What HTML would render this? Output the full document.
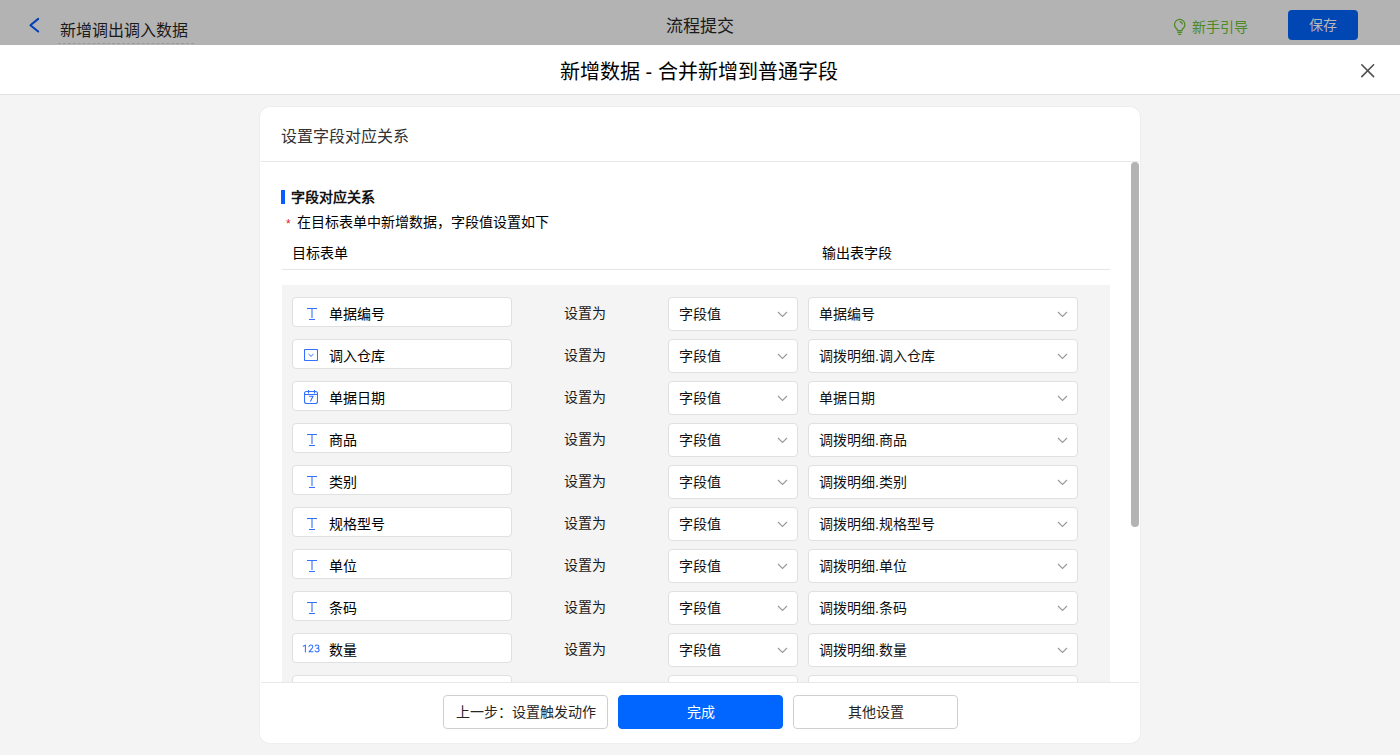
<!DOCTYPE html>
<html lang="zh-CN"><head><meta charset="utf-8">
<style>
*{margin:0;padding:0;box-sizing:border-box;}
html,body{width:1400px;height:755px;overflow:hidden;}
body{position:relative;background:#f4f4f4;font-family:"Liberation Sans",sans-serif;color:#1f1f1f;font-size:14px;}
.abs{position:absolute;}
.topbar{left:0;top:0;width:1400px;height:45px;background:#b3b3b3;}
.modalhd{left:0;top:45px;width:1400px;height:50px;background:#fff;border-bottom:1px solid #e3e3e3;}
.t{position:absolute;white-space:nowrap;line-height:1;}
.card{left:260px;top:107px;width:880px;height:636px;background:#fff;border-radius:10px;overflow:hidden;box-shadow:0 0 0 1px #eeeeee;}
.cardhd{left:1px;top:0;width:878px;height:55px;border-bottom:1px solid #e8e8e8;}
.body{left:0;top:55px;width:880px;height:520px;overflow:hidden;}
.footer{left:1px;top:575px;width:878px;height:61px;border-top:1px solid #e8e8e8;background:#fff;}
.gray{left:22px;top:123px;width:828px;height:600px;background:#f4f4f4;}
.inp{position:absolute;width:220px;height:30px;background:#fff;border:1px solid #e0e0e0;border-radius:4px;}
.sel{position:absolute;height:34px;background:#fff;border:1px solid #e0e0e0;border-radius:4px;}
.btn{position:absolute;top:588px;width:165px;height:34px;border:1px solid #cfcfcf;border-radius:4px;background:#fff;text-align:center;line-height:32px;font-size:14px;color:#262626;}
.ic{position:absolute;}
.nm{left:36px;top:9px;font-size:14px;color:#000;}
.sv{font-size:14px;color:#1a1a1a;}
.sx{left:10px;top:9px;font-size:14px;color:#111;}
.ch{position:absolute;left:108px;top:13px;}
</style></head>
<body>
<!-- top bar (masked) -->
<div class="abs topbar">
  <svg class="abs" style="left:28px;top:17px" width="13" height="17" viewBox="0 0 13 17"><path d="M10.2 1.9 L2.4 8.2 L10.2 14.5" fill="none" stroke="#0040b8" stroke-width="2" stroke-linecap="round" stroke-linejoin="round"/></svg>
  <div class="t" style="left:60px;top:23px;font-size:16px;color:#1a1a1a;">新增调出调入数据</div>
  <div class="abs" style="left:58px;top:43px;width:136px;height:0;border-top:1px dashed #9a9a9a;"></div>
  <div class="t" style="left:666px;top:18px;font-size:17px;color:#1a1a1a;">流程提交</div>
  <svg class="abs" style="left:1173px;top:18px" width="13" height="18" viewBox="0 0 13 18"><path d="M4.3 12.6V11.2C2.4 10.1 1.5 8.4 1.5 6.6A5.2 5.2 0 0 1 11.9 6.6C11.9 8.4 11 10.1 9.1 11.2V12.6Z" fill="none" stroke="#4b8a24" stroke-width="1.2" stroke-linejoin="round"/><path d="M6.6 3.6A3 3 0 0 1 9.4 6.4" fill="none" stroke="#4b8a24" stroke-width="1.1"/><path d="M4.3 14.4H9.1M5.2 16.3H8.2" stroke="#4b8a24" stroke-width="1.2"/></svg>
  <div class="t" style="left:1192px;top:20px;font-size:14px;color:#4b8a24;">新手引导</div>
  <div class="abs" style="left:1288px;top:10px;width:70px;height:30px;background:#0047b3;border-radius:4px;"></div>
  <div class="t" style="left:1309px;top:18px;font-size:14px;color:#b8b8b8;">保存</div>
</div>
<!-- modal header -->
<div class="abs modalhd">
  <div class="t" style="left:560px;top:17px;font-size:20px;color:#000;">新增数据 - 合并新增到普通字段</div>
  <svg class="abs" style="left:1360px;top:18px" width="16" height="16" viewBox="0 0 16 16"><path d="M1.8 1.8L13.6 13.6M13.6 1.8L1.8 13.6" stroke="#505050" stroke-width="1.6" stroke-linecap="round"/></svg>
</div>
<!-- card -->
<div class="abs card">
  <div class="abs cardhd">
    <div class="t" style="left:20px;top:22px;font-size:16px;color:#333;">设置字段对应关系</div>
  </div>
  <div class="abs body">
    <div class="abs" style="left:21px;top:28px;width:4px;height:14px;background:#0a5cff;"></div>
    <div class="t" style="left:31px;top:28px;font-size:14px;font-weight:bold;color:#111;">字段对应关系</div>
    <div class="t" style="left:26px;top:56px;font-size:12px;color:#e02020;">*</div>
    <div class="t" style="left:37px;top:53px;font-size:14px;color:#000;">在目标表单中新增数据，字段值设置如下</div>
    <div class="t" style="left:32px;top:84px;font-size:14px;color:#000;">目标表单</div>
    <div class="t" style="left:562px;top:84px;font-size:14px;color:#000;">输出表字段</div>
    <div class="abs" style="left:22px;top:107px;width:828px;height:1px;background:#e6e6e6;"></div>
    <div class="abs gray" id="gray"></div>
    <div id="rows">
<div class="inp" style="left:32px;top:135px;"><svg class="ic" style="left:14px;top:10px" width="10" height="12" viewBox="0 0 10 12"><path d="M0 0.5H10M5 0.5V10M2 11.5H8" stroke="#3370ff" stroke-width="1.1" fill="none"/></svg><div class="t nm">单据编号</div></div>
<div class="t sv" style="left:304px;top:144px;">设置为</div>
<div class="sel" style="left:408px;top:135px;width:130px;"><div class="t sx">字段值</div><svg class="ch" width="11" height="7" viewBox="0 0 11 7"><path d="M1 1L5.5 5.5L10 1" fill="none" stroke="#999" stroke-width="1.1"/></svg></div>
<div class="sel" style="left:548px;top:135px;width:270px;"><div class="t sx">单据编号</div><svg class="ch" style="left:248px" width="11" height="7" viewBox="0 0 11 7"><path d="M1 1L5.5 5.5L10 1" fill="none" stroke="#999" stroke-width="1.1"/></svg></div>
<div class="inp" style="left:32px;top:177px;"><svg class="ic" style="left:11px;top:9px" width="14" height="12" viewBox="0 0 14 12"><rect x="0.5" y="0.5" width="13" height="11" fill="none" stroke="#3370ff" stroke-width="1.1" rx="0.8"/><path d="M4.5 5L7 7.4L9.5 5" fill="none" stroke="#3370ff" stroke-width="1"/></svg><div class="t nm">调入仓库</div></div>
<div class="t sv" style="left:304px;top:186px;">设置为</div>
<div class="sel" style="left:408px;top:177px;width:130px;"><div class="t sx">字段值</div><svg class="ch" width="11" height="7" viewBox="0 0 11 7"><path d="M1 1L5.5 5.5L10 1" fill="none" stroke="#999" stroke-width="1.1"/></svg></div>
<div class="sel" style="left:548px;top:177px;width:270px;"><div class="t sx">调拨明细.调入仓库</div><svg class="ch" style="left:248px" width="11" height="7" viewBox="0 0 11 7"><path d="M1 1L5.5 5.5L10 1" fill="none" stroke="#999" stroke-width="1.1"/></svg></div>
<div class="inp" style="left:32px;top:219px;"><svg class="ic" style="left:11px;top:8px" width="14" height="14" viewBox="0 0 14 14"><rect x="0.5" y="1.5" width="13" height="12" rx="2" fill="none" stroke="#3370ff" stroke-width="1.1"/><path d="M0.5 4.5H13.5M4.5 0V3.5M10.5 0V3.5" stroke="#3370ff" stroke-width="1.1"/><path d="M5 6.3H9L6.4 11.6" fill="none" stroke="#3370ff" stroke-width="1.1"/></svg><div class="t nm">单据日期</div></div>
<div class="t sv" style="left:304px;top:228px;">设置为</div>
<div class="sel" style="left:408px;top:219px;width:130px;"><div class="t sx">字段值</div><svg class="ch" width="11" height="7" viewBox="0 0 11 7"><path d="M1 1L5.5 5.5L10 1" fill="none" stroke="#999" stroke-width="1.1"/></svg></div>
<div class="sel" style="left:548px;top:219px;width:270px;"><div class="t sx">单据日期</div><svg class="ch" style="left:248px" width="11" height="7" viewBox="0 0 11 7"><path d="M1 1L5.5 5.5L10 1" fill="none" stroke="#999" stroke-width="1.1"/></svg></div>
<div class="inp" style="left:32px;top:261px;"><svg class="ic" style="left:14px;top:10px" width="10" height="12" viewBox="0 0 10 12"><path d="M0 0.5H10M5 0.5V10M2 11.5H8" stroke="#3370ff" stroke-width="1.1" fill="none"/></svg><div class="t nm">商品</div></div>
<div class="t sv" style="left:304px;top:270px;">设置为</div>
<div class="sel" style="left:408px;top:261px;width:130px;"><div class="t sx">字段值</div><svg class="ch" width="11" height="7" viewBox="0 0 11 7"><path d="M1 1L5.5 5.5L10 1" fill="none" stroke="#999" stroke-width="1.1"/></svg></div>
<div class="sel" style="left:548px;top:261px;width:270px;"><div class="t sx">调拨明细.商品</div><svg class="ch" style="left:248px" width="11" height="7" viewBox="0 0 11 7"><path d="M1 1L5.5 5.5L10 1" fill="none" stroke="#999" stroke-width="1.1"/></svg></div>
<div class="inp" style="left:32px;top:303px;"><svg class="ic" style="left:14px;top:10px" width="10" height="12" viewBox="0 0 10 12"><path d="M0 0.5H10M5 0.5V10M2 11.5H8" stroke="#3370ff" stroke-width="1.1" fill="none"/></svg><div class="t nm">类别</div></div>
<div class="t sv" style="left:304px;top:312px;">设置为</div>
<div class="sel" style="left:408px;top:303px;width:130px;"><div class="t sx">字段值</div><svg class="ch" width="11" height="7" viewBox="0 0 11 7"><path d="M1 1L5.5 5.5L10 1" fill="none" stroke="#999" stroke-width="1.1"/></svg></div>
<div class="sel" style="left:548px;top:303px;width:270px;"><div class="t sx">调拨明细.类别</div><svg class="ch" style="left:248px" width="11" height="7" viewBox="0 0 11 7"><path d="M1 1L5.5 5.5L10 1" fill="none" stroke="#999" stroke-width="1.1"/></svg></div>
<div class="inp" style="left:32px;top:345px;"><svg class="ic" style="left:14px;top:10px" width="10" height="12" viewBox="0 0 10 12"><path d="M0 0.5H10M5 0.5V10M2 11.5H8" stroke="#3370ff" stroke-width="1.1" fill="none"/></svg><div class="t nm">规格型号</div></div>
<div class="t sv" style="left:304px;top:354px;">设置为</div>
<div class="sel" style="left:408px;top:345px;width:130px;"><div class="t sx">字段值</div><svg class="ch" width="11" height="7" viewBox="0 0 11 7"><path d="M1 1L5.5 5.5L10 1" fill="none" stroke="#999" stroke-width="1.1"/></svg></div>
<div class="sel" style="left:548px;top:345px;width:270px;"><div class="t sx">调拨明细.规格型号</div><svg class="ch" style="left:248px" width="11" height="7" viewBox="0 0 11 7"><path d="M1 1L5.5 5.5L10 1" fill="none" stroke="#999" stroke-width="1.1"/></svg></div>
<div class="inp" style="left:32px;top:387px;"><svg class="ic" style="left:14px;top:10px" width="10" height="12" viewBox="0 0 10 12"><path d="M0 0.5H10M5 0.5V10M2 11.5H8" stroke="#3370ff" stroke-width="1.1" fill="none"/></svg><div class="t nm">单位</div></div>
<div class="t sv" style="left:304px;top:396px;">设置为</div>
<div class="sel" style="left:408px;top:387px;width:130px;"><div class="t sx">字段值</div><svg class="ch" width="11" height="7" viewBox="0 0 11 7"><path d="M1 1L5.5 5.5L10 1" fill="none" stroke="#999" stroke-width="1.1"/></svg></div>
<div class="sel" style="left:548px;top:387px;width:270px;"><div class="t sx">调拨明细.单位</div><svg class="ch" style="left:248px" width="11" height="7" viewBox="0 0 11 7"><path d="M1 1L5.5 5.5L10 1" fill="none" stroke="#999" stroke-width="1.1"/></svg></div>
<div class="inp" style="left:32px;top:429px;"><svg class="ic" style="left:14px;top:10px" width="10" height="12" viewBox="0 0 10 12"><path d="M0 0.5H10M5 0.5V10M2 11.5H8" stroke="#3370ff" stroke-width="1.1" fill="none"/></svg><div class="t nm">条码</div></div>
<div class="t sv" style="left:304px;top:438px;">设置为</div>
<div class="sel" style="left:408px;top:429px;width:130px;"><div class="t sx">字段值</div><svg class="ch" width="11" height="7" viewBox="0 0 11 7"><path d="M1 1L5.5 5.5L10 1" fill="none" stroke="#999" stroke-width="1.1"/></svg></div>
<div class="sel" style="left:548px;top:429px;width:270px;"><div class="t sx">调拨明细.条码</div><svg class="ch" style="left:248px" width="11" height="7" viewBox="0 0 11 7"><path d="M1 1L5.5 5.5L10 1" fill="none" stroke="#999" stroke-width="1.1"/></svg></div>
<div class="inp" style="left:32px;top:471px;"><svg class="ic" style="left:5px;top:4px" width="24" height="18" viewBox="0 0 24 18"><g fill="none" stroke="#3370ff" stroke-width="1.05" stroke-linecap="round" stroke-linejoin="round"><path d="M5.3 8.3L7.4 7.1V13.9"/><path d="M10.9 8.6C11.2 7.5 12 7 12.9 7C14 7 14.8 7.7 14.8 8.7C14.8 9.6 14.2 10.3 13.2 11.4L11 13.8H15"/><path d="M17.3 8C17.6 7.3 18.2 7 19 7C20.2 7 20.9 7.7 20.9 8.6C20.9 9.6 20.1 10.3 18.8 10.3C20.3 10.3 21.1 11.1 21.1 12.1C21.1 13.2 20.2 13.9 19 13.9C18.1 13.9 17.4 13.5 17.1 12.8"/></g></svg><div class="t nm">数量</div></div>
<div class="t sv" style="left:304px;top:480px;">设置为</div>
<div class="sel" style="left:408px;top:471px;width:130px;"><div class="t sx">字段值</div><svg class="ch" width="11" height="7" viewBox="0 0 11 7"><path d="M1 1L5.5 5.5L10 1" fill="none" stroke="#999" stroke-width="1.1"/></svg></div>
<div class="sel" style="left:548px;top:471px;width:270px;"><div class="t sx">调拨明细.数量</div><svg class="ch" style="left:248px" width="11" height="7" viewBox="0 0 11 7"><path d="M1 1L5.5 5.5L10 1" fill="none" stroke="#999" stroke-width="1.1"/></svg></div>
<div class="inp" style="left:32px;top:513px;"><div class="t nm"></div></div>
<div class="sel" style="left:408px;top:513px;width:130px;"><div class="t sx"></div><svg class="ch" width="11" height="7" viewBox="0 0 11 7"><path d="M1 1L5.5 5.5L10 1" fill="none" stroke="#999" stroke-width="1.1"/></svg></div>
<div class="sel" style="left:548px;top:513px;width:270px;"><div class="t sx"></div><svg class="ch" style="left:248px" width="11" height="7" viewBox="0 0 11 7"><path d="M1 1L5.5 5.5L10 1" fill="none" stroke="#999" stroke-width="1.1"/></svg></div>
</div><!--/rows-->
  </div>
  <div class="abs scroll" style="left:871px;top:55px;width:8px;height:365px;background:#b3b3b3;border-radius:4px;"></div>
  <div class="abs footer"></div>
  <div class="btn" style="left:183px;">上一步：设置触发动作</div>
  <div class="btn" style="left:358px;background:#0066ff;border-color:#0066ff;color:#fff;">完成</div>
  <div class="btn" style="left:533px;">其他设置</div>
</div>
</body></html>
